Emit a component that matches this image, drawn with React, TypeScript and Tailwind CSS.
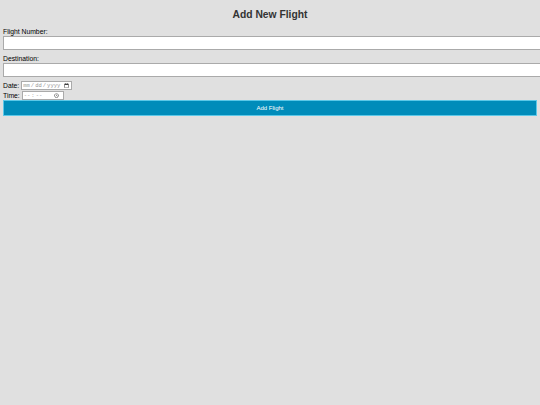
import React from 'react';

export default function App() {
  return (
    <div className="min-h-screen w-full overflow-hidden bg-[#e0e0e0] px-[3px] font-['Liberation_Sans',Arial,sans-serif] text-black">
      <h1 className="pt-[9px] text-center text-[10.3px] font-bold leading-[12px] text-[#333]">Add New Flight</h1>
      <form className="mt-[7px]" onSubmit={(e) => e.preventDefault()}>
        <label className="block text-[6.8px] leading-[8px]">Flight Number:</label>
        <input
          type="text"
          className="block h-[14px] w-[560px] border border-[#aaa] bg-white outline-none"
        />
        <label className="mt-[5px] block text-[6.8px] leading-[8px]">Destination:</label>
        <input
          type="text"
          className="block h-[14px] w-[560px] border border-[#aaa] bg-white outline-none"
        />
        <div className="mt-[4px] flex items-center gap-[2px] text-[6.8px] leading-[8px]">
          <label>Date:</label>
          <input
            type="date"
            className="h-[9px] w-[51px] border border-[#aaa] bg-white p-0 font-['Liberation_Mono',monospace] text-[5.5px] text-[#999] outline-none"
          />
        </div>
        <div className="mt-[1px] flex items-center gap-[2px] text-[6.8px] leading-[8px]">
          <label>Time:</label>
          <input
            type="time"
            className="h-[9px] w-[42px] border border-[#aaa] bg-white p-0 font-['Liberation_Mono',monospace] text-[5.5px] text-[#999] outline-none"
          />
        </div>
        <button
          type="submit"
          className="block h-[16px] w-full border border-[#5bc8e8] bg-[#008cba] text-[6px] leading-[14px] text-white"
        >
          Add Flight
        </button>
      </form>
    </div>
  );
}
